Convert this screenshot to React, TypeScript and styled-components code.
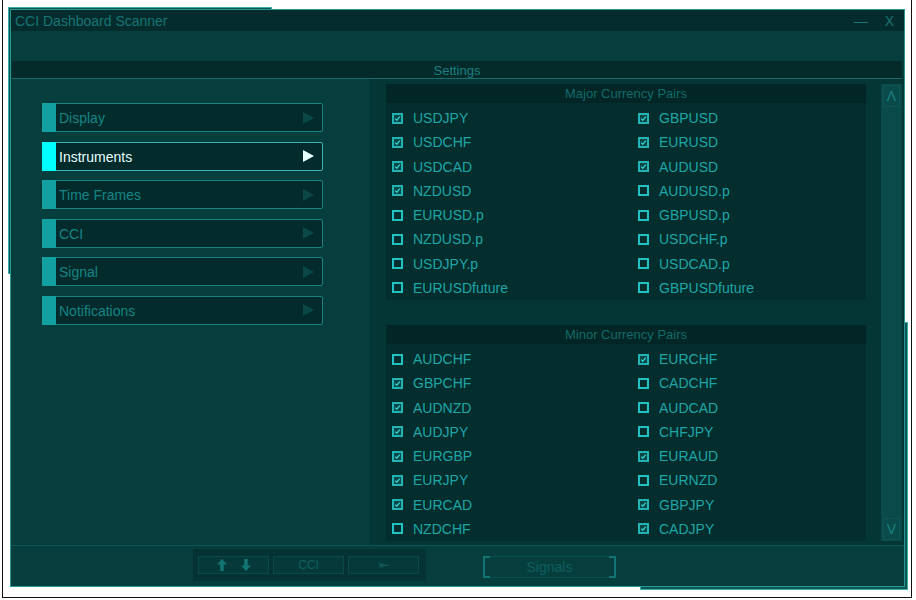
import React from 'react';
import styled, { createGlobalStyle } from 'styled-components';

const GlobalStyle = createGlobalStyle`
  html, body {
    margin: 0;
    padding: 0;
    background: #ffffff;
  }
  body {
    font-family: "Liberation Sans", Arial, sans-serif;
  }
`;

const Frame = styled.div`
  position: relative;
  margin-left: 2px;
  width: 908px;
  height: 597px;
  border: 1px solid #111;
  border-top: none;
  overflow: hidden;
`;

const Ghost = styled.div<{ $left: number; $top: number; $w: number; $h: number }>`
  position: absolute;
  left: ${({ $left }) => $left}px;
  top: ${({ $top }) => $top}px;
  width: ${({ $w }) => $w}px;
  height: ${({ $h }) => $h}px;
  box-sizing: border-box;
  background: #0b5553;
  border: 1px solid #3aaeaa;
`;

const Window = styled.div`
  position: relative;
  z-index: 1;
  margin: 9px 0 0 7px;
  width: 895px;
  height: 578px;
  box-sizing: border-box;
  border: 1px solid #2a9793;
  background: #063e3e;
  display: flex;
  flex-direction: column;
`;

const TitleBar = styled.div`
  flex: none;
  height: 21px;
  background: #052c2c;
  display: flex;
  align-items: center;
  justify-content: space-between;
  padding: 1px 10px 0 4px;
  box-sizing: border-box;
  color: #167575;
  font-size: 14px;
`;

const TitleButtons = styled.div`
  display: flex;
  gap: 17px;
  align-items: center;
`;

const Spacer = styled.div`
  flex: none;
  height: 30px;
`;

const SettingsBar = styled.div`
  flex: none;
  height: 17px;
  margin: 0 2px 0 1px;
  background: #042a2a;
  border-bottom: 1px solid #1a6c6c;
  color: #1b7f7f;
  font-size: 13px;
  line-height: 19px;
  text-align: center;
`;

const Main = styled.div`
  flex: none;
  height: 466px;
  display: grid;
  grid-template-columns: 359px 1fr;
`;

const LeftPanel = styled.div`
  background: #063e3e;
  padding: 24px 0 0 31px;
  display: flex;
  flex-direction: column;
  gap: 9.6px;
`;

const NavButton = styled.div<{ $active?: boolean }>`
  width: 281px;
  height: 29px;
  box-sizing: border-box;
  display: flex;
  align-items: stretch;
  background: #032b2b;
  border: 1px solid ${({ $active }) => ($active ? '#3cb4b4' : '#1a8080')};
  border-radius: 2px;
`;

const NavAccent = styled.div<{ $active?: boolean }>`
  width: 14px;
  margin: -1px 0 -1px -1px;
  background: ${({ $active }) => ($active ? '#00ffff' : '#13a0a0')};
`;

const NavLabel = styled.div<{ $active?: boolean }>`
  flex: 1;
  display: flex;
  align-items: center;
  padding: 1px 0 0 3px;
  font-size: 14px;
  color: ${({ $active }) => ($active ? '#e6ffff' : '#158585')};
`;

const NavArrow = styled.div<{ $active?: boolean }>`
  width: 0;
  height: 0;
  align-self: center;
  margin-right: 8px;
  border-top: 6px solid transparent;
  border-bottom: 6px solid transparent;
  border-left: 11px solid ${({ $active }) => ($active ? '#e6ffff' : '#0a4747')};
`;

const RightPanel = styled.div`
  background: #053636;
  display: flex;
  padding: 5px 0 5px 16px;
`;

const Boxes = styled.div`
  width: 480px;
  display: flex;
  flex-direction: column;
  gap: 25px;
`;

const GroupBox = styled.div`
  background: #042d2d;
`;

const GroupHeader = styled.div`
  height: 19px;
  line-height: 20px;
  background: #022525;
  color: #116a6a;
  font-size: 13px;
  text-align: center;
`;

const PairGrid = styled.div`
  display: grid;
  grid-template-columns: 246px 1fr;
  grid-auto-rows: 24.25px;
  padding: 3px 0 0 6px;
`;

const Pair = styled.div`
  display: flex;
  align-items: center;
  gap: 10px;
  color: #1ea6a6;
  font-size: 14px;
`;

const Box = styled.svg`
  width: 11px;
  height: 11px;
  flex: none;
`;

const Scrollbar = styled.div`
  margin-left: 15px;
  width: 21px;
  background: #0a4a4a;
  display: flex;
  flex-direction: column;
  justify-content: space-between;
  padding: 1px 0;
  box-sizing: border-box;
`;

const ScrollButton = styled.div`
  margin: 0 2px;
  height: 20px;
  border: 1px solid #0d5454;
  color: #1a8282;
  font-size: 14px;
  text-align: center;
  line-height: 20px;
`;

const BottomBar = styled.div`
  flex: 1;
  border-top: 1px solid #0d5656;
  display: flex;
  align-items: flex-start;
  padding: 3px 0 0 182px;
  gap: 57px;
`;

const ControlGroup = styled.div`
  width: 233px;
  height: 32px;
  box-sizing: border-box;
  background: #053232;
  display: flex;
  gap: 4px;
  padding: 7px 5px 0 5px;
`;

const ControlButton = styled.div`
  width: 71px;
  height: 18px;
  box-sizing: border-box;
  border: 1px solid #0a4949;
  background: #063a3a;
  color: #0f5f5f;
  font-size: 12px;
  display: flex;
  align-items: center;
  justify-content: center;
  gap: 14px;
`;

const SignalsButton = styled.div`
  position: relative;
  margin-top: 7px;
  width: 133px;
  height: 22px;
  box-sizing: border-box;
  border-top: 1px solid #0b4f4f;
  border-bottom: 1px solid #0b4f4f;
  color: #0e5f5f;
  font-size: 14px;
  display: flex;
  align-items: center;
  justify-content: center;
`;

const Bracket = styled.div<{ $side: 'left' | 'right' }>`
  position: absolute;
  top: -1px;
  bottom: -1px;
  width: 5px;
  ${({ $side }) => ($side === 'left' ? 'left: 0;' : 'right: 0;')}
  border: 2px solid #137373;
  ${({ $side }) => ($side === 'left' ? 'border-right: none;' : 'border-left: none;')}
`;

type PairItem = [string, boolean];

const major: PairItem[] = [
  ['USDJPY', true], ['GBPUSD', true],
  ['USDCHF', true], ['EURUSD', true],
  ['USDCAD', true], ['AUDUSD', true],
  ['NZDUSD', true], ['AUDUSD.p', false],
  ['EURUSD.p', false], ['GBPUSD.p', false],
  ['NZDUSD.p', false], ['USDCHF.p', false],
  ['USDJPY.p', false], ['USDCAD.p', false],
  ['EURUSDfuture', false], ['GBPUSDfuture', false],
];

const minor: PairItem[] = [
  ['AUDCHF', false], ['EURCHF', true],
  ['GBPCHF', true], ['CADCHF', false],
  ['AUDNZD', true], ['AUDCAD', false],
  ['AUDJPY', true], ['CHFJPY', false],
  ['EURGBP', true], ['EURAUD', true],
  ['EURJPY', true], ['EURNZD', false],
  ['EURCAD', true], ['GBPJPY', true],
  ['NZDCHF', false], ['CADJPY', true],
];

const navItems = ['Display', 'Instruments', 'Time Frames', 'CCI', 'Signal', 'Notifications'];

const CheckBox: React.FC<{ checked: boolean }> = ({ checked }) => (
  <Box viewBox="0 0 11 11">
    {checked ? (
      <>
        <rect x="0" y="0" width="11" height="11" fill="#22b4b4" />
        <rect x="2" y="2" width="7" height="7" fill="#0b4646" />
        <path d="M3.2 5.6 L4.8 7.2 L7.8 3.6" stroke="#2fd0d0" strokeWidth="1.3" fill="none" />
      </>
    ) : (
      <rect x="1" y="1" width="9" height="9" fill="#042d2d" stroke="#22c2c2" strokeWidth="2" />
    )}
  </Box>
);

const Group: React.FC<{ title: string; items: PairItem[] }> = ({ title, items }) => (
  <GroupBox>
    <GroupHeader>{title}</GroupHeader>
    <PairGrid>
      {items.map(([name, checked]) => (
        <Pair key={name}>
          <CheckBox checked={checked} />
          {name}
        </Pair>
      ))}
    </PairGrid>
  </GroupBox>
);

const ArrowIcon: React.FC<{ down?: boolean }> = ({ down }) => (
  <svg width="10" height="12" viewBox="0 0 10 12" style={down ? { transform: 'rotate(180deg)' } : undefined}>
    <path d="M5 0 L10 5.5 H6.8 V12 H3.2 V5.5 H0 Z" fill="#137474" />
  </svg>
);

const App: React.FC = () => {
  return (
    <>
      <GlobalStyle />
      <Frame>
        <Ghost $left={5} $top={7} $w={264} $h={267} />
        <Ghost $left={637} $top={322} $w={268} $h={268} />
        <Window>
          <TitleBar>
            <span>CCI Dashboard Scanner</span>
            <TitleButtons>
              <span>—</span>
              <span>X</span>
            </TitleButtons>
          </TitleBar>
          <Spacer />
          <SettingsBar>Settings</SettingsBar>
          <Main>
            <LeftPanel>
              {navItems.map((item) => {
                const active = item === 'Instruments';
                return (
                  <NavButton key={item} $active={active}>
                    <NavAccent $active={active} />
                    <NavLabel $active={active}>{item}</NavLabel>
                    <NavArrow $active={active} />
                  </NavButton>
                );
              })}
            </LeftPanel>
            <RightPanel>
              <Boxes>
                <Group title="Major Currency Pairs" items={major} />
                <Group title="Minor Currency Pairs" items={minor} />
              </Boxes>
              <Scrollbar>
                <ScrollButton>Λ</ScrollButton>
                <ScrollButton>V</ScrollButton>
              </Scrollbar>
            </RightPanel>
          </Main>
          <BottomBar>
            <ControlGroup>
              <ControlButton>
                <ArrowIcon />
                <ArrowIcon down />
              </ControlButton>
              <ControlButton>CCI</ControlButton>
              <ControlButton>⇤</ControlButton>
            </ControlGroup>
            <SignalsButton>
              <Bracket $side="left" />
              Signals
              <Bracket $side="right" />
            </SignalsButton>
          </BottomBar>
        </Window>
      </Frame>
    </>
  );
};

export default App;
